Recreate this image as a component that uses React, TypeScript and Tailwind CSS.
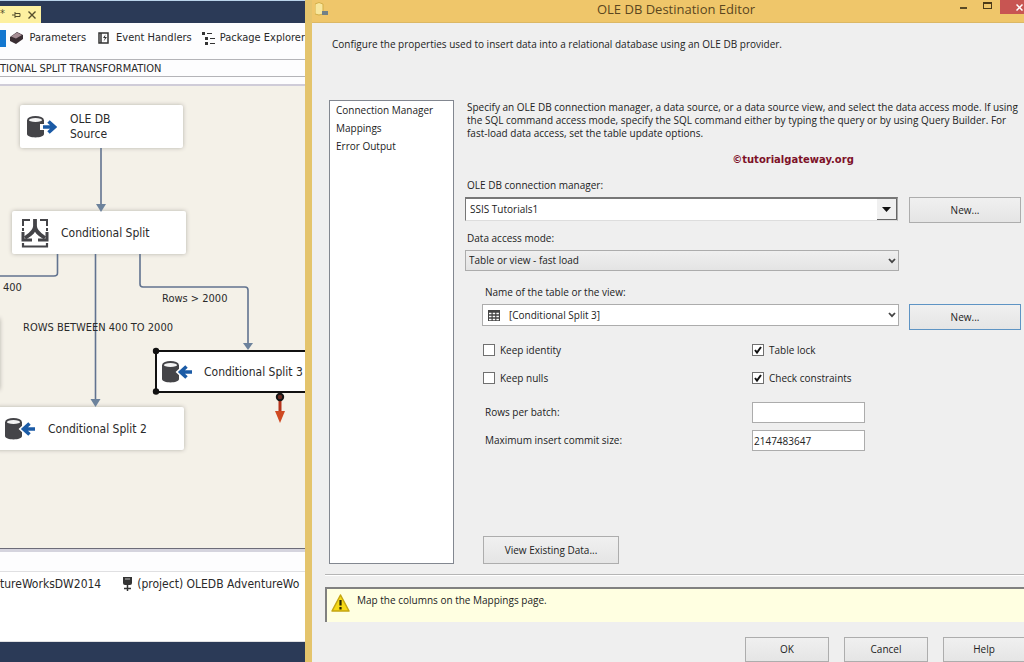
import { useState } from 'react';
import type { ReactNode } from 'react';

interface CheckOptionProps {
  label: string;
  checked: boolean;
  onChange: (checked: boolean) => void;
}

function CheckOption({ label, checked, onChange }: CheckOptionProps) {
  return (
    <label className="flex h-4 items-center gap-[5px]">
      <span className="grid">
        <input
          type="checkbox"
          checked={checked}
          onChange={(e) => onChange(e.target.checked)}
          className="col-start-1 row-start-1 h-3 w-3 appearance-none border border-[#707070] bg-white"
        />
        {checked && (
          <svg viewBox="0 0 12 12" className="pointer-events-none col-start-1 row-start-1 h-3 w-3">
            <path d="M3 6 L5 8.6 L9 3" fill="none" stroke="#111" strokeWidth="2" />
          </svg>
        )}
      </span>
      {label}
    </label>
  );
}

function DialogButton({ children, className }: { children: ReactNode; className: string }) {
  return (
    <button
      type="button"
      className={`shrink-0 border bg-linear-to-b from-[#f0f0f0] to-[#e5e5e5] text-center ${className}`}
    >
      {children}
    </button>
  );
}

function Chevron() {
  return (
    <svg viewBox="0 0 8 6" className="pointer-events-none col-start-1 row-start-1 mr-[3px] h-[6px] w-2 self-center justify-self-end">
      <path d="M1 1 L4 4.2 L7 1" fill="none" stroke="#444" strokeWidth="1.8" />
    </svg>
  );
}

function DatabaseIcon({ direction }: { direction: 'in' | 'out' }) {
  return (
    <svg viewBox="0 0 30 22" className="h-[22px] w-[30px] shrink-0">
      <path d="M0 4 V18 C0 22.500 17 22.500 17 18 V4 Z" fill="#444448" />
      <ellipse cx="8.500" cy="4" rx="7.500" ry="3" fill="#f4f4f4" stroke="#444448" strokeWidth="1.800" />
      {direction === 'out' ? (
        <>
          <path d="M13 11 H27 M20.500 4.500 L27.500 11 L20.500 17.500" fill="none" stroke="#fff" strokeWidth="6" />
          <path d="M16 11 H27 M21.500 5.500 L27.500 11 L21.500 16.500" fill="none" stroke="#1b5ba6" strokeWidth="3.600" />
        </>
      ) : (
        <>
          <path d="M30 11 H19 M25 4.500 L18 11 L25 17.500" fill="none" stroke="#fff" strokeWidth="6" />
          <path d="M30 11 H19 M24.500 5.500 L18.500 11 L24.500 16.500" fill="none" stroke="#1b5ba6" strokeWidth="3.600" />
        </>
      )}
    </svg>
  );
}

function SplitIcon() {
  return (
    <svg viewBox="0 0 28 30" className="h-[30px] w-7 shrink-0" fill="none" stroke="#444448">
      <path d="M2 8 V2 H9 M19 2 H26 V8 M2 10 V13 M26 10 V13" strokeWidth="2" />
      <path d="M2 25 V28.500 H26 V25" strokeWidth="2.200" />
      <path d="M14 1 V8 C14 14 8 17 4 20 M14 8 C14 14 20 17 24 20" strokeWidth="3.800" />
      <path d="M2 14 V22 H11 M26 14 V22 H17" strokeWidth="3" />
    </svg>
  );
}

function DesignerPane() {
  return (
    <section className="flex w-[305px] shrink-0 flex-col overflow-hidden bg-[#fdfdfe] font-['DejaVu_Sans_Condensed','DejaVu_Sans',sans-serif] text-[11px] whitespace-nowrap text-[#2a2a2a]">
      <div className="flex h-[23px] items-end border-t border-[#b9d3ea] bg-[#2b3a57]">
        <div className="flex h-[17px] w-[41px] items-center justify-between bg-[#fdf0a0] pr-[5px] text-[#554e2c]">
          <span>*</span>
          <svg viewBox="0 0 9 8" className="h-2 w-[9px]" fill="none" stroke="currentColor">
            <path d="M0 4 H3 M3 1 V7 M3 2.500 H8 V5.500 H3" />
          </svg>
          <button type="button" aria-label="Close tab">
            <svg viewBox="0 0 8 8" className="h-2 w-2" fill="none" stroke="currentColor" strokeWidth="1.400">
              <path d="M0.500 0.500 L7.500 7.500 M7.500 0.500 L0.500 7.500" />
            </svg>
          </button>
        </div>
      </div>

      <nav className="flex h-9 items-center pb-[6px]">
        <span className="h-[17px] w-2 bg-[#1478d0]" />
        <button type="button" className="ml-1 flex items-center gap-[6px]">
          <svg viewBox="0 0 14 12" className="h-3 w-[14px]">
            <path d="M0 5 L7 0 L13 3 V7 L6 12 L0 9 Z" fill="#3a2e33" />
            <path d="M1 4.500 L7 0.500 L12 3 L6 6.500 Z" fill="#a58d94" />
          </svg>
          Parameters
        </button>
        <button type="button" className="ml-3 flex items-center gap-[7px]">
          <svg viewBox="0 0 11 12" className="h-3 w-[11px]">
            <path d="M1 1 H10 V11 H1 Z M3 1 V11" fill="none" stroke="#333" strokeWidth="1.500" />
            <path d="M7.500 2.500 L5 6 H7 L5.500 9.500 L9 5 H7 Z" fill="#333" />
          </svg>
          Event Handlers
        </button>
        <button type="button" className="ml-[10px] flex items-center gap-[5px]">
          <svg viewBox="0 0 13 13" className="h-[13px] w-[13px]" fill="#333">
            <path d="M0 0 H3 V3 H0 Z M3 5 H6 V8 H3 Z M3 10 H6 V13 H3 Z M5 1 H10 V2 H5 Z M8 6 H13 V7 H8 Z M8 11 H13 V12 H8 Z" />
          </svg>
          Package Explorer
        </button>
      </nav>

      <div className="flex h-[18px] items-center border-y border-[#b4b4b8] pt-[2px]">
        TIONAL SPLIT TRANSFORMATION
      </div>

      <div className="relative mt-[7px] flex-1 overflow-hidden border-t-2 border-[#cfccd8] bg-[#f4f1e8] text-[12px]">
        <div className="absolute top-[232px] -left-10 h-[72px] w-10 rounded-xs bg-white shadow-[0_0_4px_#b5b2aa]" />
        <div className="absolute top-[19px] left-[20px] flex h-[43px] w-[163px] items-center gap-[13px] rounded-xs bg-white pl-[7px] leading-[15px] shadow-[0_0_4px_#b5b2aa]">
          <DatabaseIcon direction="out" />
          <span>OLE DB<br />Source</span>
        </div>
        <div className="absolute top-[125px] left-[12px] flex h-[43px] w-[174px] items-center gap-[12px] rounded-xs bg-white pl-[9px] shadow-[0_0_4px_#b5b2aa]">
          <SplitIcon />
          Conditional Split
        </div>
        <div className="absolute top-[321px] -left-1 flex h-[43px] w-[188px] items-center gap-[13px] rounded-xs bg-white pl-[9px] shadow-[0_0_4px_#b5b2aa]">
          <DatabaseIcon direction="in" />
          Conditional Split 2
        </div>
        <div className="absolute top-[264px] left-[155px] flex h-[43px] w-[174px] items-center gap-[12px] border-2 border-[#111] bg-white pl-[5px]">
          <DatabaseIcon direction="in" />
          Conditional Split 3
        </div>

        <svg viewBox="0 0 305 462" className="absolute top-0 left-0 h-[462px] w-[305px]" fill="none">
          <g stroke="#61738f" strokeWidth="1.600">
            <path d="M101 62 V120" />
            <path d="M95.500 168 V316" />
            <path d="M57.500 168 V187 Q57.500 190 54 190 H0" />
            <path d="M140 168 V198 Q140 201 143 201 H245 Q248 201 248 204 V258" />
          </g>
          <g fill="#6c829c">
            <path d="M96 118 H106 L101 126 Z" />
            <path d="M90.500 313 H100.500 L95.500 321 Z" />
            <path d="M243 257 H253 L248 264 Z" />
          </g>
          <circle cx="156" cy="265" r="3.200" fill="#111" />
          <circle cx="156" cy="305.500" r="3.200" fill="#111" />
          <path d="M280 313 V327" stroke="#b5341c" strokeWidth="3" />
          <path d="M275 325 H285 L280 337 Z" fill="#cf4a22" />
          <circle cx="280" cy="311" r="3.200" fill="#6a2a20" stroke="#151515" strokeWidth="2" />
        </svg>

        <span className="absolute top-[194px] left-[3px] text-[11px]">400</span>
        <span className="absolute top-[205px] left-[162px] text-[11px]">Rows &gt; 2000</span>
        <span className="absolute top-[234px] left-[23px] text-[11px]">ROWS BETWEEN 400 TO 2000</span>
      </div>

      <div className="h-[23px] border-t border-[#6c6c78] bg-[#fdfdfe]">
        <div className="h-[3px] bg-[#d5d4de]" />
      </div>
      <div className="flex h-[71px] items-start border-y border-[#e0e0e2] bg-white pt-[3px] text-[12px] leading-[18px]">
        <span>tureWorksDW2014</span>
        <svg viewBox="0 0 9 14" className="mt-[2px] ml-[22px] h-[14px] w-[9px] shrink-0">
          <path d="M0 0 H9 V6 Q9 8 7 8 H2 Q0 8 0 6 Z" fill="#333" />
          <path d="M2 2 H7" stroke="#bbb" />
          <path d="M4.500 8 V14 M1 11.500 H8" stroke="#333" strokeWidth="1.500" />
        </svg>
        <span className="ml-[5px]">(project) OLEDB AdventureWo</span>
      </div>
      <div className="h-5 bg-[#2b3a57]" />
    </section>
  );
}

function TitleBar() {
  return (
    <header className="flex h-[23px] shrink-0 items-start justify-between border-b border-[#dcb865] bg-[#efc66a]">
      <svg viewBox="0 0 13 14" className="mt-[2px] ml-[3px] h-[14px] w-[13px]">
        <path d="M0 2 Q4 -1 8 2 V12 Q4 14 0 12 Z" fill="#f8e79e" stroke="#d3ae47" />
        <path d="M7 9 H13 V13 H7 Z" fill="#718087" />
      </svg>
      <h1 className="pl-16 text-[13px] leading-[18px] text-[#5b4620]">OLE DB Destination Editor</h1>
      <div className="flex items-start text-[#4b3a18]">
        <button type="button" aria-label="Minimize" className="mt-[7px] mr-4 h-[2px] w-[7px] bg-[#5b4a25]" />
        <button type="button" aria-label="Maximize" className="mt-[2px] mr-2 h-[7px] w-[9px] border border-t-2 border-[#4b3a18]" />
        <button type="button" aria-label="Close" className="flex h-[14px] w-6 items-center justify-end bg-[#c85552] pr-[1px]">
          <svg viewBox="0 0 7 7" className="h-[7px] w-[7px]">
            <path d="M0.500 0.500 L6.500 6.500 M6.500 0.500 L0.500 6.500" stroke="#fff" strokeWidth="1.500" />
          </svg>
        </button>
      </div>
    </header>
  );
}

const pages = ['Connection Manager', 'Mappings', 'Error Output'];

function ConnectionPage() {
  const [options, setOptions] = useState({
    keepIdentity: false,
    tableLock: true,
    keepNulls: false,
    checkConstraints: true,
  });
  const [batchRows, setBatchRows] = useState('');
  const [commitSize, setCommitSize] = useState('2147483647');

  return (
    <div className="flex min-w-0 flex-1 flex-col">
      <p className="mt-px ml-[2px] leading-[13px]">
        Specify an OLE DB connection manager, a data source, or a data source view, and select the data access mode. If using
        the SQL command access mode, specify the SQL command either by typing the query or by using Query Builder. For
        fast-load data access, set the table update options.
      </p>
      <p className="mt-3 ml-[100px] text-center font-['DejaVu_Sans',sans-serif] text-[10px] leading-4 font-bold text-[#7d1128]">
        ©tutorialgateway.org
      </p>

      <label htmlFor="manager" className="mt-[9px] ml-[2px] leading-4">OLE DB connection manager:</label>
      <div className="mt-1 flex items-start gap-[11px]">
        <div className="grid min-w-0 flex-1">
          <select
            id="manager"
            className="col-start-1 row-start-1 h-6 w-full appearance-none border border-t-2 border-[#777] border-r-[#aaa] border-b-[#ddd] bg-white pl-1"
          >
            <option>SSIS Tutorials1</option>
          </select>
          <span className="pointer-events-none col-start-1 row-start-1 mt-[2px] mr-px flex h-[21px] w-5 items-center justify-center justify-self-end border-r border-b border-[#666] bg-[#f0f0f0]">
            <svg viewBox="0 0 9 5" className="h-[5px] w-[9px]">
              <path d="M0 0 H9 L4.500 5 Z" fill="#111" />
            </svg>
          </span>
        </div>
        <DialogButton className="h-[26px] w-[112px] border-[#adadad]">New...</DialogButton>
      </div>

      <label htmlFor="mode" className="mt-[7px] ml-[2px] leading-4">Data access mode:</label>
      <div className="mt-1 mr-[122px] grid">
        <select
          id="mode"
          className="col-start-1 row-start-1 h-[21px] w-full appearance-none border border-[#acacac] bg-linear-to-b from-[#efefef] to-[#e4e4e4] pl-[3px]"
        >
          <option>Table or view - fast load</option>
        </select>
        <Chevron />
      </div>

      <div className="ml-[17px] flex flex-1 flex-col items-start">
        <label htmlFor="table" className="mt-[13px] ml-[3px] leading-4">Name of the table or the view:</label>
        <div className="mt-1 flex w-full items-start gap-[10px]">
          <div className="grid min-w-0 flex-1">
            <select
              id="table"
              className="col-start-1 row-start-1 h-[22px] w-full appearance-none border border-[#acacac] bg-white pl-[26px]"
            >
              <option>[Conditional Split 3]</option>
            </select>
            <svg viewBox="0 0 12 11" className="pointer-events-none col-start-1 row-start-1 ml-[6px] h-[11px] w-3 self-center">
              <path d="M0 0 H12 V11 H0 Z" fill="#444" />
              <path d="M1 3.500 H11 M1 6.500 H11 M1 9.500 H11" stroke="#fff" strokeWidth="1.500" strokeDasharray="2.500 1.200" />
            </svg>
            <Chevron />
          </div>
          <DialogButton className="h-[26px] w-[112px] border-[#5e94c4]">New...</DialogButton>
        </div>

        <div className="mt-3 grid grid-cols-[269px_1fr] gap-y-3 pl-px">
          <CheckOption
            label="Keep identity"
            checked={options.keepIdentity}
            onChange={(keepIdentity) => setOptions({ ...options, keepIdentity })}
          />
          <CheckOption
            label="Table lock"
            checked={options.tableLock}
            onChange={(tableLock) => setOptions({ ...options, tableLock })}
          />
          <CheckOption
            label="Keep nulls"
            checked={options.keepNulls}
            onChange={(keepNulls) => setOptions({ ...options, keepNulls })}
          />
          <CheckOption
            label="Check constraints"
            checked={options.checkConstraints}
            onChange={(checkConstraints) => setOptions({ ...options, checkConstraints })}
          />
        </div>

        <div className="mt-4 grid grid-cols-[267px_113px] items-center gap-y-[7px] pl-[3px]">
          <label htmlFor="batch">Rows per batch:</label>
          <input
            id="batch"
            value={batchRows}
            onChange={(e) => setBatchRows(e.target.value)}
            className="h-[21px] border border-[#acacac] bg-white px-px"
          />
          <label htmlFor="commit">Maximum insert commit size:</label>
          <input
            id="commit"
            value={commitSize}
            onChange={(e) => setCommitSize(e.target.value)}
            className="h-[21px] border border-[#acacac] bg-white px-px"
          />
        </div>

        <DialogButton className="mt-auto ml-px h-7 w-[136px] border-[#adadad]">View Existing Data...</DialogButton>
      </div>
    </div>
  );
}

function DestinationEditor() {
  return (
    <section className="flex min-w-0 flex-1 flex-col border-l-[7px] border-[#e4c46c] bg-[#efefef] font-['Open_Sans',sans-serif] text-[10px] text-[#222]">
      <TitleBar />
      <p className="mt-[13px] ml-5 leading-4">
        Configure the properties used to insert data into a relational database using an OLE DB provider.
      </p>

      <div className="mt-12 ml-[17px] flex min-h-0 flex-1 gap-[11px] pr-[3px]">
        <ul className="w-[125px] shrink-0 border border-[#828790] bg-white pl-[6px] leading-[18px]">
          {pages.map((page) => (
            <li key={page}>
              <button type="button" className="block">{page}</button>
            </li>
          ))}
        </ul>
        <ConnectionPage />
      </div>

      <footer className="mt-[10px] ml-[13px]">
        <hr className="h-[2px] border-t border-b border-t-[#b5b5b5] border-b-white" />
        <div className="mt-[11px] flex h-[35px] items-start gap-[7px] border-t-2 border-l-2 border-[#808080] bg-[#ffffe1] pt-[3px] pl-[4px]">
          <svg viewBox="0 0 19 18" className="mt-[2px] h-[18px] w-[19px]">
            <path d="M9.500 1 L18 17 H1 Z" fill="#f5d916" stroke="#c5a512" strokeLinejoin="round" strokeWidth="1.500" />
            <path d="M9.500 6 V11.500 M9.500 13 V15.500" stroke="#2a2606" strokeWidth="2.200" />
          </svg>
          <span className="leading-4">Map the columns on the Mappings page.</span>
        </div>
        <div className="mt-[15px] flex h-[25px] justify-end gap-[15px] overflow-hidden">
          <DialogButton className="h-[25px] w-[84px] border-[#adadad]">OK</DialogButton>
          <DialogButton className="h-[25px] w-[84px] border-[#adadad]">Cancel</DialogButton>
          <DialogButton className="h-[25px] w-[81px] border-r-0 border-[#adadad]">Help</DialogButton>
        </div>
      </footer>
    </section>
  );
}

export default function App() {
  return (
    <main className="flex h-screen overflow-hidden">
      <DesignerPane />
      <DestinationEditor />
    </main>
  );
}
